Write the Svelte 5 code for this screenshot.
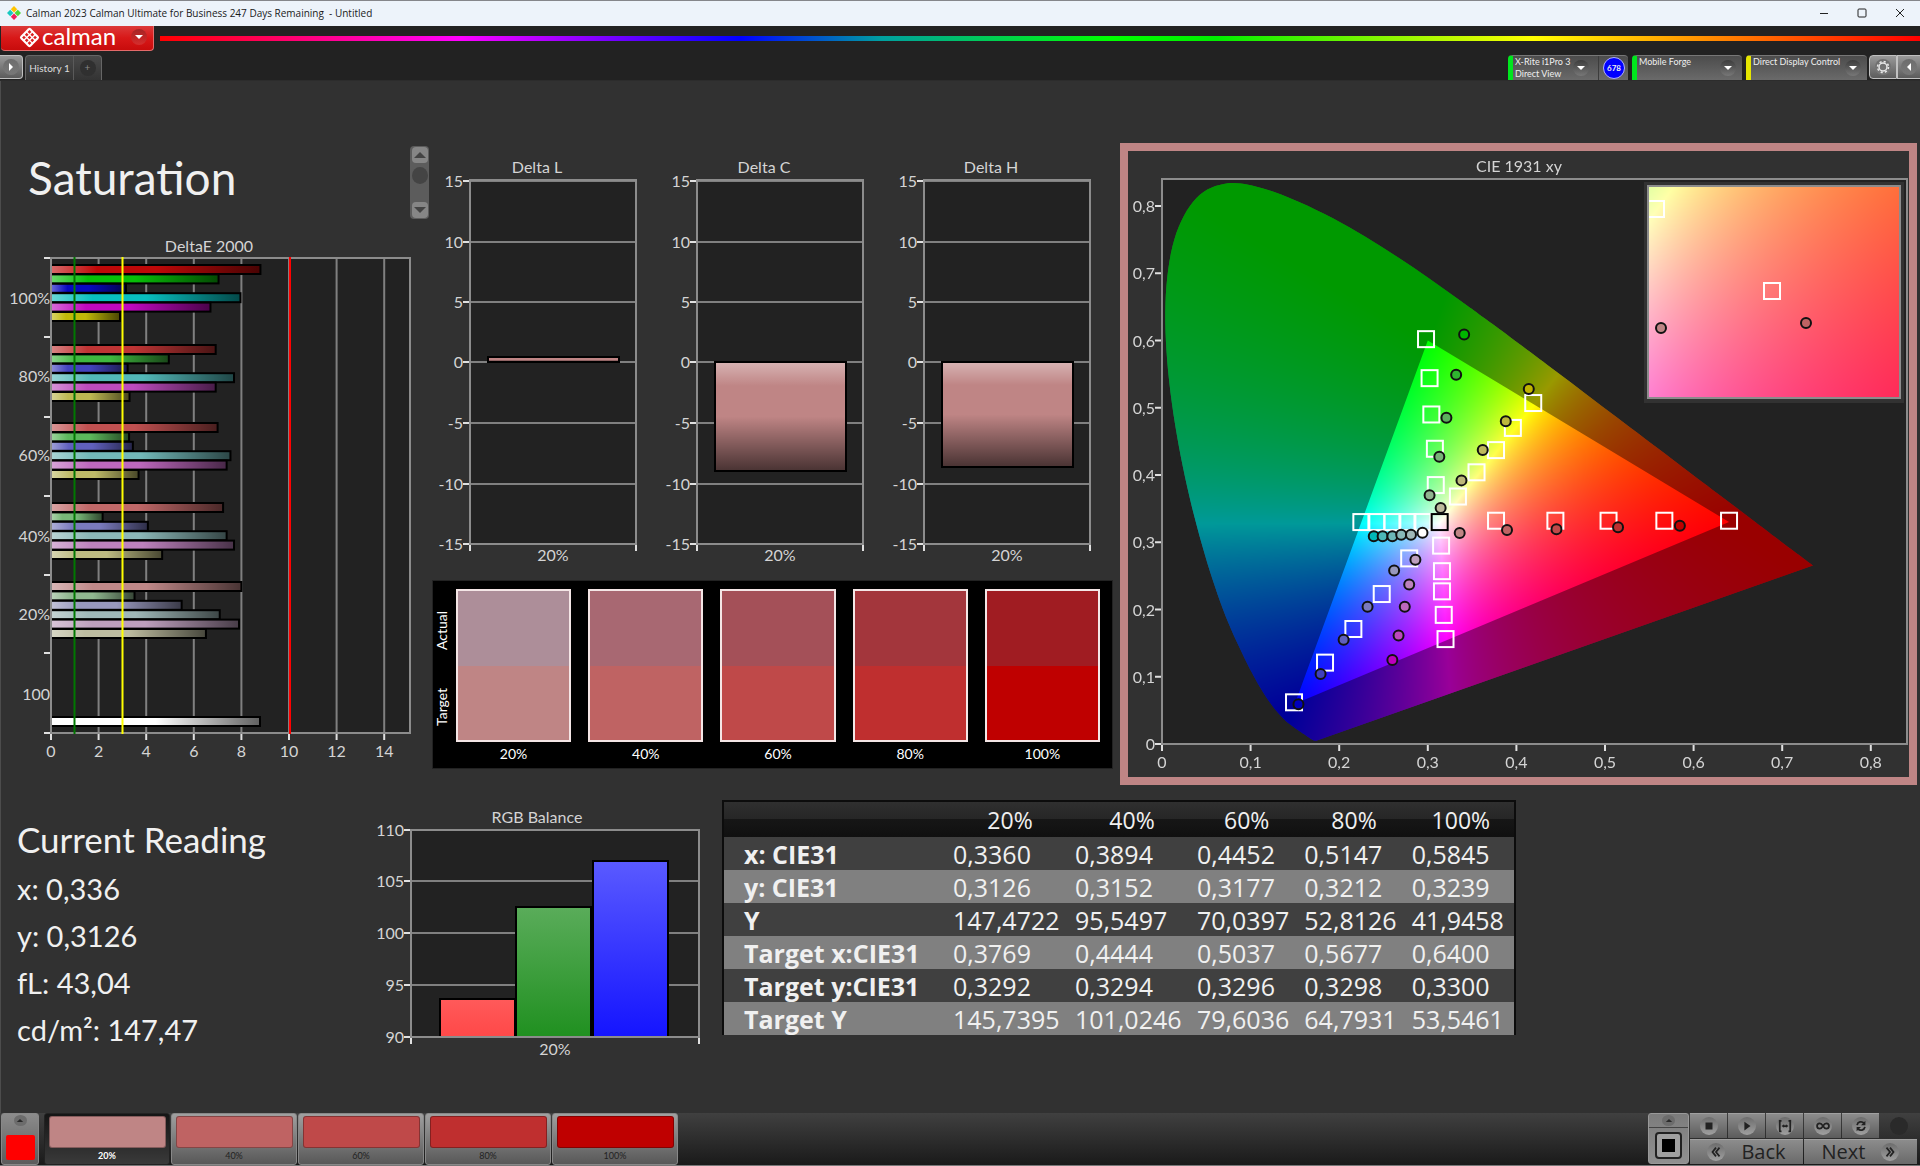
<script>
  import { onMount } from 'svelte';

  const levels = ['20%', '40%', '60%', '80%', '100%'];
  const targets = ['#bf8585', '#bf6363', '#bf4949', '#bf2f2f', '#bf0000'];
  const actuals = ['#ad8e99', '#a86872', '#a45058', '#a3363c', '#a01c22'];
  const swatches = levels.map((label, i) => ({ label, target: targets[i], actual: actuals[i] }));

  // DeltaE 2000: red, green, blue, cyan, magenta, yellow per saturation level
  const deltaE = [
    { label: '100%', y: 265, values: [8.8, 7.04, 3.15, 7.96, 6.7, 2.9], colors: ['#bf0808', '#08bf08', '#0808bf', '#08bfbf', '#bf08bf', '#bfb808'] },
    { label: '80%', y: 345, values: [6.92, 4.95, 3.22, 7.69, 6.92, 3.3], colors: ['#bf3434', '#3fb83f', '#4343be', '#52b8b8', '#bd4bbd', '#bdb852'] },
    { label: '60%', y: 423, values: [7, 3.28, 3.44, 7.54, 7.38, 3.68], colors: ['#c05050', '#5cb85c', '#6060bd', '#72b8b8', '#bd68bd', '#bdba68'] },
    { label: '40%', y: 503, values: [7.23, 2.17, 4.07, 7.38, 7.69, 4.67], colors: ['#c06868', '#78b878', '#7a7abd', '#8cb8b8', '#bd82bd', '#bdbb82'] },
    { label: '20%', y: 582, values: [8, 3.51, 5.49, 7.09, 7.9, 6.51], colors: ['#bf8888', '#90b890', '#9898bd', '#a0b8b8', '#bd9fbd', '#bdbca0'] },
  ];
  const deLabels = [['100%', 304], ['80%', 382], ['60%', 461], ['40%', 542], ['20%', 620], ['100', 700]];
  const deTicks = [258, 337, 417, 496, 575, 653, 733];
  const ex = (v) => 51 + v * 23.8;

  const deltas = [
    { name: 'Delta L', top: 214, height: 5 },
    { name: 'Delta C', top: 219, height: 109 },
    { name: 'Delta H', top: 219, height: 105 },
  ];
  const deltaTicks = [[15, 38], [10, 99], [5, 159], [0, 219], [-5, 280], [-10, 341], [-15, 401]];

  const rgbTicks = [[110, 45], [105, 96], [100, 148], [95, 200], [90, 252]];
  const rgbBars = [
    { x: 70, y: 214, a: '#ff5a5a', b: '#ff4848' },
    { x: 146, y: 122, a: '#5aac5a', b: '#209020' },
    { x: 223, y: 76, a: '#5a5aff', b: '#1414ff' },
  ];

  const rows = [
    ['x: CIE31', '0,3360', '0,3894', '0,4452', '0,5147', '0,5845'],
    ['y: CIE31', '0,3126', '0,3152', '0,3177', '0,3212', '0,3239'],
    ['Y', '147,4722', '95,5497', '70,0397', '52,8126', '41,9458'],
    ['Target x:CIE31', '0,3769', '0,4444', '0,5037', '0,5677', '0,6400'],
    ['Target y:CIE31', '0,3292', '0,3294', '0,3296', '0,3298', '0,3300'],
    ['Target Y', '145,7395', '101,0246', '79,6036', '64,7931', '53,5461'],
  ];

  // CIE 1931 chart geometry, in viewBox units
  const cx = (x) => 34 + x * 886;
  const cy = (y) => 593 - y * 672.5;
  const cieTicks = [0, 0.1, 0.2, 0.3, 0.4, 0.5, 0.6, 0.7, 0.8];
  const comma = (v) => String(v).replace('.', ',');
  const targetPoints = [
    [0.298, 0.602], [0.302, 0.544], [0.304, 0.49], [0.308, 0.439], [0.309, 0.385],
    [0.419, 0.507], [0.396, 0.47], [0.377, 0.437], [0.355, 0.404], [0.334, 0.368],
    [0.225, 0.33], [0.242, 0.33], [0.26, 0.33], [0.277, 0.33], [0.294, 0.33],
    [0.377, 0.332], [0.444, 0.332], [0.504, 0.332], [0.567, 0.332], [0.64, 0.332],
    [0.315, 0.295], [0.316, 0.257], [0.316, 0.227], [0.318, 0.192], [0.32, 0.156],
    [0.279, 0.276], [0.248, 0.223], [0.216, 0.171], [0.184, 0.121], [0.149, 0.062],
  ];
  const readings = [
    [0.341, 0.609, '#00b400'], [0.332, 0.549, '#2fb42f'], [0.321, 0.485, '#5cb05c'], [0.313, 0.427, '#78b478'], [0.302, 0.37, '#90b490'],
    [0.414, 0.528, '#bfb400'], [0.388, 0.48, '#bdb83c'], [0.362, 0.437, '#bdb85c'], [0.338, 0.392, '#bdb87a'], [0.3145, 0.351, '#bdba9c'],
    [0.239, 0.309, '#00b8b8'], [0.249, 0.309, '#4cb8b8'], [0.26, 0.309, '#6cb8b8'], [0.27, 0.311, '#88b8b8'], [0.281, 0.311, '#a0b8b8'],
    [0.294, 0.314, '#ffffff'],
    [0.336, 0.3136, '#bf8585'], [0.3894, 0.3182, '#bf6363'], [0.4452, 0.3195, '#bf4949'], [0.5147, 0.3222, '#bf2f2f'], [0.5845, 0.3245, '#bf0000'],
    [0.286, 0.274, '#bd9fbd'], [0.279, 0.237, '#bd82bd'], [0.274, 0.204, '#bd68bd'], [0.267, 0.1615, '#bd48bd'], [0.26, 0.125, '#bd00bd'],
    [0.262, 0.258, '#9898bd'], [0.232, 0.204, '#7a7abd'], [0.205, 0.155, '#6060bd'], [0.179, 0.104, '#4040bd'], [0.154, 0.059, '#0000bd'],
  ];
  const locus = [
    [0.1741, 0.005], [0.1714, 0.0051], [0.1689, 0.0069], [0.1644, 0.0109], [0.1566, 0.0177], [0.144, 0.0297],
    [0.1355, 0.0399], [0.1241, 0.0578], [0.1096, 0.0868], [0.0913, 0.1327], [0.0687, 0.2007], [0.0454, 0.295],
    [0.0235, 0.4127], [0.0082, 0.5384], [0.0039, 0.6548], [0.0139, 0.7502], [0.0389, 0.812], [0.0743, 0.8338],
    [0.1142, 0.8262], [0.1547, 0.8059], [0.1929, 0.7816], [0.2296, 0.7543], [0.2658, 0.7243], [0.3016, 0.6923],
    [0.3373, 0.6589], [0.3731, 0.6245], [0.4441, 0.5547], [0.5125, 0.4866], [0.5752, 0.4242], [0.627, 0.3725],
    [0.6658, 0.334], [0.6915, 0.3083], [0.719, 0.2809], [0.7347, 0.2653],
  ];

  function colorAt(x, y) {
    const X = x / y;
    const Z = (1 - x - y) / y;
    const r = Math.max(0, 3.2406 * X - 1.5372 - 0.4986 * Z);
    const g = Math.max(0, -0.9689 * X + 1.8758 + 0.0415 * Z);
    const b = Math.max(0, 0.0557 * X - 0.204 + 1.057 * Z);
    const k = 255 / Math.max(r, g, b);
    return [r * k, g * k, b * k];
  }

  function shade(w, h, toX, toY) {
    const c = document.createElement('canvas');
    c.width = w;
    c.height = h;
    const g = c.getContext('2d');
    const img = g.createImageData(w, h);
    for (let j = 0; j < h; j++) {
      for (let i = 0; i < w; i++) {
        const [r, gg, b] = colorAt(toX(i), Math.max(0.001, toY(j)));
        const o = (j * w + i) * 4;
        img.data[o] = r;
        img.data[o + 1] = gg;
        img.data[o + 2] = b;
        img.data[o + 3] = 255;
      }
    }
    g.putImageData(img, 0, 0);
    return c;
  }

  function locusPath() {
    const p = new Path2D();
    const pts = locus.map(([x, y]) => [cx(x), cy(y)]);
    p.moveTo(...pts[0]);
    for (let i = 0; i < pts.length - 1; i++) {
      const a = pts[Math.max(0, i - 1)], b = pts[i], c = pts[i + 1], d = pts[Math.min(pts.length - 1, i + 2)];
      p.bezierCurveTo(
        b[0] + (c[0] - a[0]) / 6, b[1] + (c[1] - a[1]) / 6,
        c[0] - (d[0] - b[0]) / 6, c[1] - (d[1] - b[1]) / 6,
        c[0], c[1]
      );
    }
    p.closePath();
    return p;
  }

  let canvas;
  onMount(() => {
    const g = canvas.getContext('2d');
    g.save();
    g.clip(locusPath());
    g.drawImage(shade(781, 626, (i) => (i - 34) / 886, (j) => (593 - j) / 672.5), 0, 0);
    const out = new Path2D();
    out.rect(0, 0, 781, 626);
    out.moveTo(cx(0.64), cy(0.33));
    out.lineTo(cx(0.3), cy(0.6));
    out.lineTo(cx(0.15), cy(0.06));
    out.closePath();
    g.fillStyle = 'rgba(0,0,0,0.4)';
    g.fill(out, 'evenodd');
    g.restore();
    g.fillStyle = '#323232';
    g.fillRect(516, 31, 260, 221);
    g.drawImage(shade(252, 212, (i) => 0.3315 + i / 2723, (j) => 0.3755 - j / 2265), 520, 35);
  });
</script>

<svelte:head><title>Calman</title></svelte:head>

{#snippet arrow(dir)}
  <span class="knob"><svg viewBox="0 0 16 16"><path class={dir} d="M4 6h8l-4 4z" /></svg></span>
{/snippet}

<div class="app">
  <header class="titlebar">
    <svg class="appicon" viewBox="0 0 14 14">
      <path d="M7 0l3.200 3.200L7 6.400 3.800 3.200z" fill="#ffc400" />
      <path d="M3.200 3.800L6.400 7 3.200 10.200 0 7z" fill="#18c8c0" />
      <path d="M10.800 3.800L14 7l-3.200 3.200L7.600 7z" fill="#50d838" />
      <path d="M7 7.600l3.200 3.200L7 14l-3.200-3.200z" fill="#f0205c" />
    </svg>
    <span>Calman 2023 Calman Ultimate for Business 247 Days Remaining&nbsp; - Untitled</span>
    <div class="winbtns">
      <button aria-label="Minimize"><svg viewBox="0 0 10 10"><path d="M1 5.500h8" /></svg></button>
      <button aria-label="Maximize"><svg viewBox="0 0 10 10"><rect x="1" y="1" width="8" height="8" rx="1" /></svg></button>
      <button aria-label="Close"><svg viewBox="0 0 10 10"><path d="M1 1l8 8M9 1l-8 8" /></svg></button>
    </div>
  </header>

  <div class="brandbar">
    <button class="brand" aria-label="Calman menu">
      <svg class="logo" viewBox="0 0 20 20">
        <g transform="rotate(45 10 10)">
          <rect x="3" y="3" width="14" height="14" rx="2" fill="#fff" />
          <g fill="#dc1f1f">
            <rect x="5" y="5" width="2.500" height="2.500" /><rect x="8.750" y="5" width="2.500" height="2.500" /><rect x="12.500" y="5" width="2.500" height="2.500" />
            <rect x="5" y="8.750" width="2.500" height="2.500" /><rect x="8.750" y="8.750" width="2.500" height="2.500" /><rect x="12.500" y="8.750" width="2.500" height="2.500" />
            <rect x="5" y="12.500" width="2.500" height="2.500" /><rect x="8.750" y="12.500" width="2.500" height="2.500" /><rect x="12.500" y="12.500" width="2.500" height="2.500" />
          </g>
        </g>
      </svg>
      <span class="word">calman</span>
      {@render arrow('down')}
    </button>
    <div class="rainbow"></div>
  </div>

  <nav class="tabs">
    <button class="side" aria-label="Expand">{@render arrow('right')}</button>
    <div class="tabset">
      <button class="tab">History 1</button>
      <button class="plus" aria-label="Add tab"><span>+</span></button>
    </div>
    <div class="devices">
      <div class="device meter">
        <button class="pick"><span class="names">X-Rite i1Pro 3<br />Direct View</span>{@render arrow('down')}</button>
        <span class="count">678</span>
      </div>
      <div class="device source">
        <button class="pick"><span class="names">Mobile Forge</span>{@render arrow('down')}</button>
      </div>
      <div class="device display">
        <button class="pick"><span class="names">Direct Display Control</span>{@render arrow('down')}</button>
      </div>
      <button class="side gear" aria-label="Settings">
        <span class="knob">
          <svg viewBox="0 0 16 16" fill="none" stroke="#e8e8e8">
            <circle cx="8" cy="8" r="4" stroke-width="1.500" />
            <circle cx="8" cy="8" r="5.500" stroke-width="1.500" stroke-dasharray="2.160 2.160" />
          </svg>
        </span>
      </button>
      <button class="side last" aria-label="Collapse">{@render arrow('left')}</button>
    </div>
  </nav>

  <main>
    <section class="upper">
      <div class="left">
        <div class="head">
          <h1>Saturation</h1>
          <div class="scroller">
            <button aria-label="Scroll up"><svg viewBox="0 0 12 8"><path d="M0 7l6-6 6 6z" /></svg></button>
            <i></i>
            <button aria-label="Scroll down"><svg viewBox="0 0 12 8"><path d="M0 1l6 6 6-6z" /></svg></button>
          </div>
        </div>
        <svg class="chart" viewBox="0 230 430 540" role="img" aria-label="DeltaE 2000">
          <defs>
            <linearGradient id="sheenH"><stop offset="0" stop-color="#fff" stop-opacity=".4" /><stop offset=".22" stop-color="#fff" stop-opacity="0" /><stop offset=".5" stop-color="#000" stop-opacity="0" /><stop offset="1" stop-color="#000" stop-opacity=".62" /></linearGradient>
          </defs>
          <text x="209" y="252" text-anchor="middle">DeltaE 2000</text>
          <rect class="plot" x="51" y="258" width="359" height="475" />
          {#each [0, 2, 4, 6, 8, 10, 12, 14] as v}
            <line class="grid" x1={ex(v)} x2={ex(v)} y1="258" y2="733" />
            <line class="tick" x1={ex(v)} x2={ex(v)} y1="734" y2="740" />
            <text x={ex(v)} y="757" text-anchor="middle">{v}</text>
          {/each}
          {#each deTicks as y}<line class="tick" x1="44" x2="51" y1={y} y2={y} />{/each}
          {#each deLabels as [t, y]}<text x="50" {y} text-anchor="end">{t}</text>{/each}
          {#each deltaE as group}
            {#each group.values as v, i}
              <rect x="51" y={group.y + i * 9.4} width={v * 23.8} height="9" fill={group.colors[i]} />
              <rect x="51" y={group.y + i * 9.4} width={v * 23.8} height="9" fill="url(#sheenH)" stroke="#000" stroke-width="2" />
            {/each}
          {/each}
          <rect x="51" y="717" width="209" height="9" fill="#fff" />
          <rect x="51" y="717" width="209" height="9" fill="url(#sheenH)" stroke="#000" stroke-width="2" />
          <path class="frame" d="M51 258H410V733H51z" />
          <line x1="74.500" x2="74.500" y1="257" y2="734" stroke="#007800" stroke-width="2" />
          <line x1="122.500" x2="122.500" y1="257" y2="734" stroke="#ff0" stroke-width="2" />
          <line x1="290" x2="290" y1="257" y2="734" stroke="#f00" stroke-width="2" />
        </svg>
      </div>

      <div class="middle">
        <div class="deltas">
          {#each deltas as d, i}
            <svg class="chart" viewBox="0 0 227 437" role="img" aria-label={d.name}>
              <defs>
                <linearGradient id={'sheenV' + i} x2="0" y2="1"><stop offset="0" stop-color="#fff" stop-opacity=".38" /><stop offset=".22" stop-color="#fff" stop-opacity="0" /><stop offset=".5" stop-color="#000" stop-opacity="0" /><stop offset="1" stop-color="#000" stop-opacity=".62" /></linearGradient>
              </defs>
              <text x="107" y="30" text-anchor="middle">{d.name}</text>
              <rect class="plot" x="40" y="37" width="166" height="364" />
              {#each deltaTicks as [v, y]}
                <line class="grid" x1="40" x2="206" y1={y} y2={y} />
                <line class="tick" x1="33" x2="40" y1={y} y2={y} />
                <text x="33" y={y + 6} text-anchor="end">{v}</text>
              {/each}
              <rect x="58" y={d.top} width="131" height={d.height} fill="#bf8585" />
              <rect x="58" y={d.top} width="131" height={d.height} fill="url(#{'sheenV' + i})" stroke="#000" stroke-width="2" />
              <path class="frame" d="M40 37H206V401H40z" />
              <path class="tick" d="M40 402v6M206 402v6" />
              <text x="123" y="418" text-anchor="middle">20%</text>
            </svg>
          {/each}
        </div>
        <div class="compare">
          <div class="sides"><span>Actual</span><span>Target</span></div>
          {#each swatches as s}
            <figure>
              <div class="pair"><i style:background={s.actual}></i><i style:background={s.target}></i></div>
              <figcaption>{s.label}</figcaption>
            </figure>
          {/each}
        </div>
      </div>

      <div class="cie">
        <canvas bind:this={canvas} width="781" height="626"></canvas>
        <svg class="chart" viewBox="0 0 781 626" role="img" aria-label="CIE 1931 xy">
          <text x="391" y="21" text-anchor="middle">CIE 1931 xy</text>
          <rect x="34" y="28" width="745" height="565" class="frame" />
          {#each cieTicks as t}
            <line class="tick" x1={cx(t)} x2={cx(t)} y1="594" y2="600" />
            <text x={cx(t)} y="617" text-anchor="middle">{comma(t)}</text>
            <line class="tick" x1="27" x2="33" y1={cy(t)} y2={cy(t)} />
            <text x="27" y={cy(t) + 6} text-anchor="end">{comma(t)}</text>
          {/each}
          {#each targetPoints as [x, y]}
            <rect class="target" x={cx(x) - 8} y={cy(y) - 8} width="16" height="16" />
          {/each}
          <rect class="target white" x={cx(0.3134) - 8} y={cy(0.33) - 8} width="16" height="16" />
          {#each readings as [x, y, c]}
            <circle class="reading" cx={cx(x)} cy={cy(y)} r="5" fill={c} />
          {/each}
          <rect x="520" y="35" width="252" height="212" class="frame" />
          <path class="target" d="M521 50h15v16h-15" />
          <rect class="target" x="636" y="132" width="16" height="16" />
          <circle class="reading" cx="533" cy="177" r="5" fill="#bf8585" />
          <circle class="reading" cx="678" cy="172" r="5" fill="#bf6363" />
        </svg>
      </div>
    </section>

    <section class="lower">
      <div class="current">
        <h2>Current Reading</h2>
        <p>x: 0,336</p>
        <p>y: 0,3126</p>
        <p>fL: 43,04</p>
        <p>cd/m²: 147,47</p>
      </div>
      <svg class="chart" viewBox="0 0 352 285" role="img" aria-label="RGB Balance">
        <defs>
          {#each rgbBars as b, i}
            <linearGradient id={'rgb' + i} x2="0" y2="1"><stop offset="0" stop-color={b.a} /><stop offset="1" stop-color={b.b} /></linearGradient>
          {/each}
        </defs>
        <text x="167" y="38" text-anchor="middle">RGB Balance</text>
        <rect class="plot" x="41" y="45" width="288" height="207" />
        {#each rgbTicks as [v, y]}
          <line class="grid" x1="41" x2="329" y1={y} y2={y} />
          <line class="tick" x1="34" x2="41" y1={y} y2={y} />
          <text x="34" y={y + 6} text-anchor="end">{v}</text>
        {/each}
        {#each rgbBars as b, i}
          <rect x={b.x} y={b.y} width="75" height={252 - b.y} fill="url(#{'rgb' + i})" stroke="#000" stroke-width="2" />
        {/each}
        <path class="frame" d="M41 45H329V252H41z" />
        <path class="tick" d="M41 253v6M329 253v6" />
        <text x="185" y="270" text-anchor="middle">20%</text>
      </svg>
      <table>
        <colgroup><col class="c0" /><col class="c1" /><col class="c1" /><col class="c2" /><col class="c2" /><col class="c2" /></colgroup>
        <thead><tr><td></td>{#each levels as l}<th scope="col">{l}</th>{/each}</tr></thead>
        <tbody>
          {#each rows as [name, ...cells]}
            <tr><th scope="row">{name}</th>{#each cells as c}<td>{c}</td>{/each}</tr>
          {/each}
        </tbody>
      </table>
    </section>
  </main>

  <footer>
    <button class="current-color" aria-label="Pattern color">
      <span class="up"><svg viewBox="0 0 10 8"><path d="M1 6l4-4 4 4z" /></svg></span>
      <i></i>
    </button>
    <div class="steps">
      {#each swatches as s, i}
        <button class="step" class:active={i === 0}><i style:background={s.target}></i><span>{s.label}</span></button>
      {/each}
    </div>
    <div class="transport">
      <div class="pattern">
        <button aria-label="Show patterns" class="ptop"><span class="up"><svg viewBox="0 0 10 8"><path d="M1 6l4-4 4 4z" /></svg></span></button>
        <button aria-label="Pattern window" class="pbox"><i></i></button>
      </div>
      <div class="controls">
        <div class="ctl-row">
          <button aria-label="Stop"><span class="disc"><svg viewBox="0 0 16 16"><path d="M4 4h8v8H4z" /></svg></span></button>
          <button aria-label="Play"><span class="disc"><svg viewBox="0 0 16 16"><path d="M5 3l7 5-7 5z" /></svg></span></button>
          <button aria-label="Read range"><span class="disc"><svg viewBox="0 0 16 16"><path d="M4 2H2v12h2M12 2h2v12h-2" class="ln" /><path d="M4 8l3-2v4zM12 8L9 6v4zM7 7h2v2H7z" /></svg></span></button>
          <button aria-label="Continuous"><span class="disc"><svg viewBox="0 0 16 16"><path d="M8 8C6.500 5.500 5.500 5 4.200 5a3 3 0 000 6C5.500 11 6.500 10.500 8 8s2.500-3 3.800-3a3 3 0 010 6C10.500 11 9.500 10.500 8 8z" class="ln" /></svg></span></button>
          <button aria-label="Refresh"><span class="disc"><svg viewBox="0 0 16 16"><path d="M3.500 7A4.500 4.500 0 0111.500 5M12.500 9A4.500 4.500 0 014.500 11" class="ln" /><path d="M13 2v5H8zM3 14V9h5z" /></svg></span></button>
          <span class="blank"><span class="disc off"></span></span>
        </div>
        <div class="nav-row">
          <button><span class="disc"><svg viewBox="0 0 16 16"><path d="M8 3L4 8l4 5M12 3L8 8l4 5" class="ln" /></svg></span>Back</button>
          <button>Next<span class="disc"><svg viewBox="0 0 16 16"><path d="M4 3l4 5-4 5M8 3l4 5-4 5" class="ln" /></svg></span></button>
        </div>
      </div>
    </div>
  </footer>
</div>

<style>
  :global(body) { margin: 0; background: #313131; }
  * { box-sizing: border-box; }
  button { font: inherit; color: inherit; border: 0; padding: 0; margin: 0; background: none; }
  .app {
    min-height: 100vh; display: flex; flex-direction: column;
    background: #313131; color: #f0f0f0; border-bottom: 1px solid #777;
    font-family: Lato, 'Open Sans', sans-serif;
  }
  .titlebar {
    height: 26px; display: flex; align-items: center; gap: 5px; padding: 0 0 2px 7px;
    background: #edf3fa; border-top: 1px solid #85868a; color: #1a1a1a;
    font: 10px/16px 'Open Sans', sans-serif;
  }
  .appicon { width: 14px; height: 14px; }
  .winbtns { margin-left: auto; margin-right: 1px; display: flex; }
  .winbtns button { width: 38px; height: 22px; display: grid; place-items: center; }
  .winbtns svg { width: 10px; height: 10px; fill: none; stroke: #222; }

  .brandbar { height: 26px; display: flex; gap: 6px; background: #222; padding-left: 1px; }
  .brand {
    width: 153px; height: 25px; flex: none; display: flex; align-items: center; padding: 0 6px 2px 18px; color: #fff;
    background: linear-gradient(#dc3a3a, #d81818 50%, #c80c0c); border: 1px solid #e46a6a; border-top: 0; border-left: 0; border-radius: 0 0 4px 4px;
  }
  .logo { width: 21px; height: 21px; }
  .word { font-size: 24px; line-height: 22px; margin: 0 auto 2px 2px; }
  .rainbow { flex: 1; height: 5px; margin-top: 10px; background: linear-gradient(90deg, #f00, #f0f 17%, #00f 33%, #00a0a0 41%, #0f0 54%, #0e0 60%, #ff0 78%, #ff8c00 88%, #f00); }
  .knob { width: 16px; height: 16px; border-radius: 50%; flex: none; display: block; background: linear-gradient(rgba(0, 0, 0, .25), rgba(255, 255, 255, .12)); }
  .knob svg { display: block; width: 16px; height: 16px; }
  .knob path { fill: #fff; transform-origin: 8px 8px; }
  .knob .right { transform: rotate(-90deg); }
  .knob .left { transform: rotate(90deg); }

  .tabs { height: 29px; display: flex; align-items: flex-start; padding-top: 3px; background: #222; font-size: 10px; border-bottom: 1px solid #2c2c2c; }
  .side { width: 23px; height: 24px; display: grid; place-items: center; background: linear-gradient(#999, #5c5c5c); border: 1px solid #c0c0c0; border-radius: 0 4px 4px 0; border-left: 0; }
  .tabset { display: flex; height: 25px; margin-left: 2px; border: 1px solid #666; border-bottom: 0; border-radius: 4px 4px 0 0; background: linear-gradient(#4a4a4a, #333); }
  .tab { width: 48px; color: #ddd; border-right: 1px solid #5a5a5a; }
  .plus { width: 27px; display: grid; place-items: center; color: #888; }
  .plus span { width: 16px; height: 16px; line-height: 15px; border-radius: 50%; background: #303030; }
  .devices { margin-left: auto; display: flex; gap: 4px; font-size: 9px; line-height: 12px; }
  .device { height: 25px; display: flex; background: linear-gradient(#4c4c4c, #6a6a6a); border-radius: 4px 4px 0 0; border-left: 5px solid #00e61e; border-top: 1px solid #777; }
  .pick { flex: 1; display: flex; justify-content: space-between; align-items: center; text-align: left; padding: 0 6px 0 2px; white-space: nowrap; }
  .names { align-self: flex-start; }
  .meter { width: 120px; }
  .source { width: 110px; }
  .display { width: 121px; border-left-color: #e6e600; }
  .meter .pick { border-right: 1px solid #3c3c3c; padding-right: 9px; }
  .count { width: 22px; height: 22px; margin: 1px 3px 0 4px; border-radius: 50%; background: #00f; border: 1px solid #b0b0ff; font-weight: bold; font-size: 8px; line-height: 20px; text-align: center; }
  .gear { width: 28px; margin-left: -2px; border-radius: 4px 0 0 4px; border-left: 1px solid #c0c0c0; }
  .last { margin-left: -4px; border-radius: 0; border-right: 0; border-left: 1px solid #c0c0c0; }

  main { flex: 1; padding-top: 62px; box-shadow: inset 1px 0 #4c4c4c; }
  .upper { display: grid; grid-template-columns: 430fr 690fr 800fr; align-items: start; }
  .chart { display: block; width: 100%; height: auto; overflow: visible; }
  .chart text { font-size: 16px; fill: #d4d4d4; }
  .plot { fill: #222; }
  .grid { stroke: #808080; stroke-width: 2; }
  .frame { fill: none; stroke: #8c8c8c; stroke-width: 2; }
  .tick { stroke: #e0e0e0; stroke-width: 2; fill: none; }

  .head { height: 87px; display: flex; justify-content: space-between; padding: 3px 1px 0 28px; }
  h1 { margin: 2px 0 0; font-size: 46px; line-height: 60px; font-weight: 400; }
  .scroller { width: 19px; height: 73px; background: #5c5c5c; border-radius: 4px; display: flex; flex-direction: column; align-items: center; justify-content: space-between; padding: 1px; }
  .scroller button { width: 16px; height: 16px; background: #868686; border-radius: 4px; display: grid; place-items: center; }
  .scroller svg { width: 12px; height: 8px; fill: #444; }
  .scroller i { width: 16px; height: 17px; border-radius: 50%; background: #444; margin-bottom: 14px; }

  .middle { padding: 0 7px 0 0; }
  .deltas { display: grid; grid-template-columns: repeat(3, 227fr); margin-right: 2px; }
  .compare { display: flex; gap: 17px; margin-left: 2px; padding: 8px 12px 7px 0; background: #000; border: 1px solid #222; color: #fff; font-size: 14px; line-height: 18px; }
  .sides { width: 20px; margin-right: -14px; height: 153px; display: flex; flex-direction: row-reverse; writing-mode: vertical-rl; transform: rotate(180deg); justify-content: center; }
  .sides span { flex: 1; padding-bottom: 6px; text-align: center; }
  figure { margin: 0; flex: 1; text-align: center; }
  .pair { height: 153px; border: 2px solid #f4e6e6; display: flex; flex-direction: column; }
  .pair i { flex: 1; }
  figcaption { padding-top: 3px; height: 19px; }

  .cie { display: grid; border: 8px solid #bf8585; margin-right: 3px; }
  .cie canvas, .cie svg { grid-area: 1 / 1; width: 100%; height: auto; display: block; }
  .cie canvas { background: linear-gradient(#222, #222) no-repeat 34px 28px / 745px 565px; }
  .target { fill: none; stroke: #fff; stroke-width: 2; }
  .white { stroke: #000; }
  .reading { stroke: #111; stroke-width: 2; }

  .lower { display: grid; grid-template-columns: 370fr 352fr 794fr 404fr; align-items: start; }
  .current { padding: 28px 0 0 17px; font-size: 29px; }
  .current p { margin: 0; line-height: 47px; }
  h2 { margin: 0; font-size: 35px; line-height: 52px; font-weight: 400; }
  table { margin-top: 15px; width: 100%; border-collapse: collapse; table-layout: fixed; border: 2px solid #0c0c0c; border-bottom: 0; font: 25px/32px 'Open Sans', sans-serif; }
  .c0 { width: 226px; }
  .c1 { width: 122px; }
  thead tr { height: 36px; background: linear-gradient(#303030, #262626 50%, #161616 50%, #101010); }
  thead th { font-size: 23px; font-weight: 400; padding: 0; }
  tbody tr { height: 33px; background: #404040; }
  tbody tr:nth-child(even) { background: #808080; }
  tbody th { text-align: left; padding: 0 0 0 20px; white-space: nowrap; }
  tbody td { padding: 0 0 0 4px; white-space: nowrap; }

  footer { height: 52px; display: flex; padding-left: 1px; background: linear-gradient(#404040, #1a1a1a); color: #222; }
  .current-color { width: 38px; border-radius: 3px; background: linear-gradient(#8c8c8c, #5c5c5c); border: 1px solid #888; display: flex; flex-direction: column; align-items: center; justify-content: space-between; padding: 1px 3px 4px; }
  .current-color i { width: 29px; height: 25px; background: #f00; border-radius: 2px; }
  .up { width: 13px; height: 11px; border-radius: 50%; background: #6c6c6c; display: grid; place-items: center; }
  .up svg { width: 8px; height: 7px; fill: #2a2a2a; }
  .steps { display: flex; gap: 1px; margin-left: 5px; }
  .step { width: 126px; border-radius: 3px; background: linear-gradient(#a0a0a0, #585858); border: 1px solid #888; display: flex; flex-direction: column; align-items: center; padding-top: 2px; font-size: 9px; }
  .step i { width: 117px; height: 32px; border-radius: 3px; border: 1px solid rgba(0, 0, 0, .3); }
  .step span { line-height: 16px; }
  .step.active { background: linear-gradient(#151515, #3a3a3a); border-color: #222; color: #fff; font-weight: bold; }
  .transport { margin-left: auto; margin-right: 3px; padding-bottom: 1px; display: flex; gap: 1px; }
  .pattern { width: 41px; display: flex; flex-direction: column; background: linear-gradient(#7c7c7c, #909090); border: 1px solid #999; border-radius: 3px; }
  .ptop { height: 14px; border-bottom: 1px solid #444; display: grid; place-items: center; }
  .pbox { width: 27px; height: 27px; margin: 4px auto; border: 2px solid #222; border-radius: 4px; background: #a0a0a0; display: grid; place-items: center; }
  .pbox i { width: 13px; height: 13px; background: #000; }
  .controls { width: 227px; display: flex; flex-direction: column; gap: 1px; }
  .ctl-row, .nav-row { display: flex; height: 25px; gap: 1px; }
  .ctl-row button, .nav-row button { flex: 1; display: flex; align-items: center; justify-content: center; background: linear-gradient(#8c8c8c, #5c5c5c); border-top: 1px solid #a0a0a0; }
  .nav-row button { gap: 16px; font: 20px/22px 'Open Sans', sans-serif; background: linear-gradient(#8c8c8c, #6a6a6a); }
  .blank { flex: 1; display: grid; place-items: center; }
  .disc { width: 18px; height: 18px; border-radius: 50%; background: linear-gradient(#6c6c6c, #a0a0a0); display: grid; place-items: center; }
  .disc.off { background: #2a2a2a; }
  .disc svg { width: 14px; height: 14px; fill: #222; }
  .disc .ln { fill: none; stroke: #222; stroke-width: 2; }
</style>
